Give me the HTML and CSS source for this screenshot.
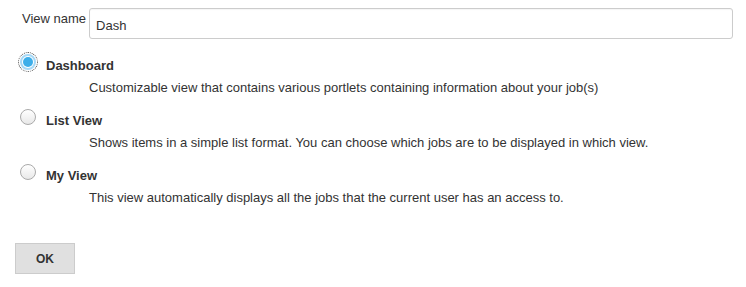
FILE: index.html
```html
<!DOCTYPE html>
<html lang="en">
<head>
    <meta charset="UTF-8">
    <title>New View</title>
    <link rel="stylesheet" href="styles.css">
</head>
<body>

    <!-- New view form -->
    <form class="new-view">
        <div class="name-row">
            <label class="name-label" for="name">View name</label>
            <input class="name-input" id="name" type="text" value="Dash">
        </div>

        <div class="mode">
            <label class="mode-title">
                <span class="radio checked focused"><span class="dot"></span></span>
                <span class="mode-name">Dashboard</span>
            </label>
            <div class="mode-desc">Customizable view that contains various portlets containing information about your job(s)</div>
        </div>

        <div class="mode">
            <label class="mode-title">
                <span class="radio"></span>
                <span class="mode-name">List View</span>
            </label>
            <div class="mode-desc">Shows items in a simple list format. You can choose which jobs are to be displayed in which view.</div>
        </div>

        <div class="mode">
            <label class="mode-title">
                <span class="radio"></span>
                <span class="mode-name">My View</span>
            </label>
            <div class="mode-desc">This view automatically displays all the jobs that the current user has an access to.</div>
        </div>

        <div class="buttons">
            <button type="button" class="ok-button">OK</button>
        </div>
    </form>

</body>
</html>
```

FILE: styles.css
```css
/* General */
body {
    font-family: "Liberation Sans", Arial, sans-serif;
    font-size: 13px;
    color: #333;
    background: #fff;
    margin: 0;
    padding: 0;
}

.new-view {
    padding: 8px 13px 0 15px;
}

/* View name */
.name-row {
    display: flex;
    align-items: flex-start;
    gap: 3px;
}

.name-label {
    margin-left: 7px;
    padding-top: 3px;
    line-height: 16px;
}

.name-input {
    flex: 1;
    height: 31px;
    box-sizing: border-box;
    border: 1px solid #ccc;
    border-radius: 3px;
    padding: 3px 6px 0;
    font-family: inherit;
    font-size: 13px;
    color: #333;
    background: #fff;
    box-shadow: inset 0 1px 1px rgba(0, 0, 0, 0.04);
}

/* Modes */
.mode {
    margin-top: 15px;
}

.mode + .mode {
    margin-top: 13px;
}

.mode-title {
    display: flex;
    align-items: flex-start;
    gap: 10px;
    height: 20px;
    font-weight: bold;
}

.mode-name {
    padding-top: 4px;
    line-height: 16px;
}

.radio {
    flex-shrink: 0;
    width: 16px;
    height: 16px;
    box-sizing: border-box;
    border: 1px solid #aaa;
    border-radius: 50%;
    background: linear-gradient(#fff, #e8e8e8);
    display: flex;
    align-items: center;
    justify-content: center;
    margin-left: 5px;
}

.radio.checked {
    border: 2px solid #a6d8f6;
    background: #fff;
}

.radio.focused {
    outline: 1px dotted #444;
    outline-offset: 1px;
}

.radio .dot {
    width: 10px;
    height: 10px;
    border-radius: 50%;
    background: #3daee9;
}

.mode-desc {
    margin: 6px 0 0 74px;
    line-height: 16px;
}

/* Buttons */
.buttons {
    margin-top: 37px;
}

.ok-button {
    width: 60px;
    height: 31px;
    background: #e0e0e0;
    border: 1px solid #ccc;
    font-family: inherit;
    font-size: 12px;
    font-weight: bold;
    color: #333;
    cursor: pointer;
}

.ok-button:hover {
    background: #d4d4d4;
}
```
